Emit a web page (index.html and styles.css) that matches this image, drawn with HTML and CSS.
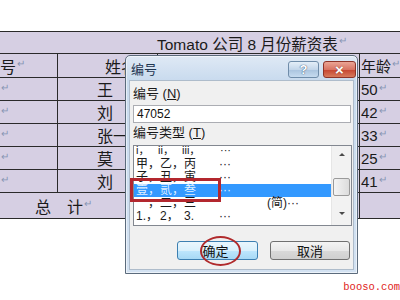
FILE: index.html
```html
<!DOCTYPE html>
<html lang="zh">
<head>
<meta charset="utf-8">
<link rel="stylesheet" href="styles.css">
</head>
<body>
<div class="page">
  <div class="sheet">
    <div class="c title">Tomato 公司 8 月份薪资表<i class="pm">↵</i></div>
    <div class="c c1 hd">编号<i class="pm">↵</i></div>
    <div class="c c2 hd">姓名<i class="pm">↵</i></div>
    <div class="c c3">部门<i class="pm">↵</i></div>
    <div class="c c4">年龄<i class="pm">↵</i></div>

    <div class="c c1"><i class="pm">↵</i></div>
    <div class="c c2">王&emsp;刚<i class="pm">↵</i></div>
    <div class="c c3"></div>
    <div class="c c4">50<i class="pm">↵</i></div>

    <div class="c c1"><i class="pm">↵</i></div>
    <div class="c c2">刘&emsp;强<i class="pm">↵</i></div>
    <div class="c c3"></div>
    <div class="c c4">42<i class="pm">↵</i></div>

    <div class="c c1"><i class="pm">↵</i></div>
    <div class="c c2">张一鸣<i class="pm">↵</i></div>
    <div class="c c3"></div>
    <div class="c c4">33<i class="pm">↵</i></div>

    <div class="c c1"><i class="pm">↵</i></div>
    <div class="c c2">莫&emsp;言<i class="pm">↵</i></div>
    <div class="c c3"></div>
    <div class="c c4">25<i class="pm">↵</i></div>

    <div class="c c1"><i class="pm">↵</i></div>
    <div class="c c2">刘&emsp;洋<i class="pm">↵</i></div>
    <div class="c c3"></div>
    <div class="c c4">41<i class="pm">↵</i></div>

    <div class="c total">总&emsp;计<i class="pm">↵</i></div>
    <div class="c c3"></div>
    <div class="c c4"></div>
  </div>

  <div class="dialog">
    <div class="titlebar">
      <span class="dlg-title">编号</span>
      <span class="tb-btns">
        <span class="tbtn help">?</span>
        <span class="tbtn close">×</span>
      </span>
    </div>
    <div class="body">
      <div class="label l1">编号 (<u>N</u>)</div>
      <div class="input">47052</div>
      <div class="label l2">编号类型 (<u>T</u>)</div>
      <div class="listbox">
        <div class="items">
          <div class="item small"><span class="k">i，</span><span class="k">ii，</span><span class="k k3">iii，</span><span>···</span></div>
          <div class="item"><span class="k">甲，</span><span class="k">乙，</span><span class="k k3">丙</span><span>···</span></div>
          <div class="item"><span class="k">子，</span><span class="k">丑，</span><span class="k k3">寅</span><span>···</span></div>
          <div class="item sel"><span class="k">壹，</span><span class="k">贰，</span><span class="k k3">叁</span><span>···</span></div>
          <div class="item"><span class="k">一，</span><span class="k">二，</span><span class="k k3">三</span><span class="jian">(简)···</span></div>
          <div class="item"><span class="k">1.，</span><span class="k">2，</span><span class="k k3">3.</span><span>···</span></div>
        </div>
        <div class="sb">
          <span class="arr up"></span>
          <div class="track"><div class="thumb"></div></div>
          <span class="arr down"></span>
        </div>
      </div>
      <div class="buttons">
        <span class="btn ok">确定</span>
        <span class="btn">取消</span>
      </div>
    </div>
  </div>

  <div class="mark rect"></div>
  <div class="mark ring"></div>
  <div class="watermark">booso.com</div>
</div>
</body>
</html>
```

FILE: styles.css
```css
html, body {
  margin: 0;
  padding: 0;
  background: #ffffff;
}
body {
  font-family: "Liberation Sans", "Noto Sans CJK SC", sans-serif;
  color: #151515;
}
.page {
  position: relative;
  width: 400px;
  height: 300px;
  overflow: hidden;
  background: #ffffff;
}

/* ---------- spreadsheet table ---------- */
.sheet {
  display: grid;
  grid-template-columns: 74px 100px 202px 180px;
  grid-template-rows: 22px 24px repeat(5, 23px) 26px;
  width: 556px;
  margin: 31px 0 0 -16px;
  border-top: 1px solid #2a2a2a;
  background: #d6cfe3;
  font-family: "Liberation Sans", "Noto Sans CJK SC", sans-serif;
  font-size: 15px;
}
.c {
  box-sizing: border-box;
  border-right: 1px solid #2a2a2a;
  border-bottom: 1px solid #2a2a2a;
  display: flex;
  align-items: center;
  white-space: nowrap;
  overflow: hidden;
  color: #1a1a1a;
}
.c1, .c2, .total { font-size: 16px; }
.pm {
  font-style: normal;
  font-size: 10px;
  color: #8796b4;
  margin-left: 1px;
  position: relative;
  top: -2px;
}
.title {
  grid-column: 1 / -1;
  padding-left: 173px;
  font-size: 15.5px;
}
.c1 { padding-left: 16px; }
.c1.hd { padding-left: 0; }
.c2 { padding-left: 39px; }
.c2.hd { padding-left: 47px; }
.c3 { padding-left: 6px; }
.c4 { padding-left: 1px; }
.total {
  grid-column: 1 / 3;
  padding-left: 51px;
}

/* ---------- dialog ---------- */
.dialog {
  position: absolute;
  left: 125px;
  top: 55px;
  width: 233px;
  height: 219px;
  box-sizing: border-box;
  border: 1px solid #5b6b7c;
  border-radius: 5px 5px 0 0;
  background: linear-gradient(#dfe9f5, #c9dbee 24px, #d3e2f2);
  box-shadow: inset 0 0 0 1px rgba(255, 255, 255, 0.55);
  display: flex;
  flex-direction: column;
  font-family: "Liberation Sans", "Noto Sans CJK SC", sans-serif;
}
.titlebar {
  height: 24px;
  display: flex;
  align-items: center;
  padding: 0 1px 0 5px;
}
.dlg-title {
  flex: 1;
  font-size: 13px;
  color: #1e3550;
}
.tb-btns {
  display: flex;
  gap: 4px;
  align-self: flex-start;
  margin-top: 5px;
}
.tbtn {
  height: 17px;
  box-sizing: border-box;
  border-radius: 3px;
  display: flex;
  align-items: center;
  justify-content: center;
  color: #ffffff;
  font-weight: bold;
}
.help {
  width: 31px;
  border: 1px solid #6f8ca9;
  background: linear-gradient(#e4eef8, #c3d6ea 50%, #a9c3de 51%, #c6dbef);
  font-size: 13px;
  text-shadow: 0 0 1px #39587a, 0 0 1px #39587a;
}
.close {
  width: 33px;
  border: 1px solid #8d3328;
  background: linear-gradient(#eba595, #d87463 50%, #c5432f 51%, #d77a5c);
  font-size: 15px;
  text-shadow: 0 0 1px #6a1d12;
}
.body {
  flex: 1;
  margin: 0 3px 3px;
  background: #f0f0f0;
  border: 1px solid #aebccb;
  padding: 0 1px 0 3px;
  display: flex;
  flex-direction: column;
}
.label {
  height: 16px;
  line-height: 16px;
  font-size: 13px;
  color: #1a1a1a;
}
.label u { text-decoration: underline; }
.l1 { margin-top: 5px; }
.l2 { margin-top: 2px; }
.input {
  margin-top: 3px;
  margin-right: 1px;
  height: 18px;
  box-sizing: border-box;
  border: 1px solid #abadb3;
  background: #ffffff;
  font-size: 12px;
  line-height: 16px;
  padding-left: 3px;
  color: #111;
}
.listbox {
  margin-top: 4px;
  height: 81px;
  box-sizing: border-box;
  border: 1px solid #828790;
  background: #ffffff;
  display: flex;
}
.items {
  flex: 1;
  overflow: hidden;
  margin-top: -1px;
}
.item {
  display: flex;
  height: 13px;
  line-height: 13px;
  font-size: 12px;
  padding-left: 2px;
  white-space: nowrap;
  color: #1a1a1a;
}
.item .k { width: 24px; flex: none; }
.item .k3 { width: 35px; }
.item.small { font-size: 11px; line-height: 11px; }
.item.small .k:first-child { width: 22px; }
.item.small .k3 { width: 38px; }
.item.sel {
  background: #3399ff;
  color: #dff0ff;
}
.jian { margin-left: 48px; }
.sb {
  width: 19px;
  background: #f2f2f2;
  border-left: 1px solid #e6e6e6;
  display: flex;
  flex-direction: column;
  align-items: center;
}
.arr {
  width: 0;
  height: 0;
  border-left: 3px solid transparent;
  border-right: 3px solid transparent;
}
.arr.up {
  border-bottom: 3px solid #4a4a4a;
  margin-top: 7px;
  margin-bottom: 7px;
}
.arr.down {
  border-top: 3px solid #4a4a4a;
  margin-bottom: 10px;
}
.track {
  flex: 1;
  align-self: stretch;
  padding: 15px 1px 0;
}
.thumb {
  height: 18px;
  box-sizing: border-box;
  border: 1px solid #9a9a9a;
  border-radius: 2px;
  background: linear-gradient(90deg, #f4f4f4, #dcdcdc);
}
.buttons {
  margin-top: 15px;
  margin-right: 2px;
  display: flex;
  justify-content: flex-end;
  gap: 12px;
}
.btn {
  width: 80px;
  height: 19px;
  box-sizing: border-box;
  border: 1px solid #707070;
  border-radius: 3px;
  background: linear-gradient(#f4f4f4, #e8e8e8 50%, #d9d9d9 51%, #cfcfcf);
  font-size: 13px;
  display: flex;
  align-items: center;
  justify-content: center;
  color: #111;
}
.btn.ok {
  width: 81px;
  border-color: #3c7fb1;
  background: linear-gradient(#eaf6fd, #d9f0fc 50%, #bee6fd 51%, #a7d9f5);
  padding-right: 4px;
}

/* ---------- annotations ---------- */
.mark {
  position: absolute;
  box-sizing: border-box;
}
.rect {
  left: 130px;
  top: 178px;
  width: 91px;
  height: 24px;
  border: 3px solid #b3272e;
}
.ring {
  left: 200px;
  top: 236px;
  width: 41px;
  height: 30px;
  border: 2px solid #b02a2c;
  border-radius: 50%;
}
.watermark {
  position: absolute;
  right: 0;
  bottom: 7px;
  font-family: "Liberation Mono", monospace;
  font-size: 10.5px;
  color: #e02424;
}
```
